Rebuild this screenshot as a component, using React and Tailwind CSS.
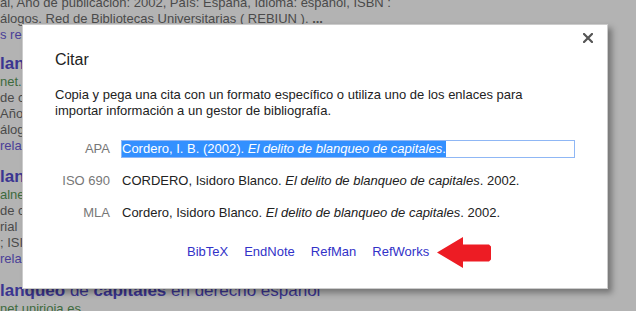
export default function App() {
  const snip = "text-[13px] leading-[16px] text-[#4a4a4a] whitespace-nowrap";
  const url = "text-[13px] leading-[16px] text-[#3d6a3d] whitespace-nowrap";
  const link = "text-[13px] leading-[16px] text-[#4a3f98] whitespace-nowrap";
  const title = "text-[17px] leading-[20px] text-[#3b3591] whitespace-nowrap";
  const clip = " w-[22px] overflow-hidden";
  return (
    <div className="relative w-[636px] h-[311px] overflow-hidden bg-[#b3b3b3] font-['Liberation_Sans',Arial,sans-serif]">
      {/* background page content (dimmed) */}
      <div className="-mt-[5px] flex flex-col">
        <div className={snip}>al, Año de publicación: 2002, País: España, Idioma: español, ISBN :</div>
        <div className={snip}>álogos. Red de Bibliotecas Universitarias ( REBIUN ). <b>...</b></div>
        <div className={link + clip}>s rel</div>

        <div className={title + clip + " mt-[11px]"}><b>lan</b></div>
        <div className={url + clip}>net.</div>
        <div className={snip + clip}>de c</div>
        <div className={snip + clip}>Año</div>
        <div className={snip + clip}>álog</div>
        <div className={link + clip}>rela</div>

        <div className={title + clip + " mt-[13px]"}><b>lan</b></div>
        <div className={url + clip}>alne</div>
        <div className={snip + clip}>de c</div>
        <div className={snip + clip}>rial</div>
        <div className={snip + clip}>; ISI</div>
        <div className={link + clip}>rela</div>

        <div className={title + " mt-[14px]"}><b>lanqueo</b> de <b>capitales</b> en derecho español</div>
        <div className={url}>net.unirioja.es</div>
      </div>

      {/* dialog */}
      <div className="absolute left-[22px] top-[24px] w-[586px] h-[265px] bg-white border border-black/20 shadow-[4px_4px_6px_rgba(0,0,0,0.35)] pl-[32px] pt-[25px] text-[#222]">
        <svg className="absolute left-[560px] top-[8px]" width="10" height="10" viewBox="0 0 10 10">
          <path d="M1 1 L9 9 M9 1 L1 9" stroke="#555" strokeWidth="2.2" strokeLinecap="square" />
        </svg>

        <div className="text-[16px] leading-[20px]">Citar</div>

        <div className="mt-[17px] text-[13px] leading-[16px] whitespace-nowrap">
          Copia y pega una cita con un formato específico o utiliza uno de los enlaces para
          <br />
          importar información a un gestor de bibliografía.
        </div>

        <div className="mt-[21px] flex flex-col gap-[14px] text-[13px]">
          <div className="flex items-center h-[18px]">
            <div className="w-[55px] text-right text-[#777]">APA</div>
            <div className="ml-[11px] w-[454px] h-[18px] border border-[#8fb7f5] flex items-center">
              <span className="bg-[#3390ff] text-white leading-[16px] whitespace-nowrap">
                Cordero, I. B. (2002). <i>El delito de blanqueo de capitales</i>.
              </span>
            </div>
          </div>
          <div className="flex items-center h-[18px]">
            <div className="w-[55px] text-right text-[#777]">ISO 690</div>
            <div className="ml-[12px] whitespace-nowrap">
              CORDERO, Isidoro Blanco. <i>El delito de blanqueo de capitales</i>. 2002.
            </div>
          </div>
          <div className="flex items-center h-[18px]">
            <div className="w-[55px] text-right text-[#777]">MLA</div>
            <div className="ml-[12px] whitespace-nowrap">
              Cordero, Isidoro Blanco. <i>El delito de blanqueo de capitales</i>. 2002.
            </div>
          </div>
        </div>

        <div className="mt-[22px] pl-[132px] flex gap-[16px] text-[13px] leading-[16px] text-[#3232c8]">
          <span>BibTeX</span>
          <span>EndNote</span>
          <span>RefMan</span>
          <span>RefWorks</span>
        </div>

        <svg className="absolute left-[414px] top-[212px]" width="55" height="31" viewBox="0 0 55 31">
          <polygon points="0,15.5 26,0 26,7.5 52,7.5 54,9.5 54,22.5 52,24.5 26,24.5 26,31" fill="#ed1c24" />
        </svg>
      </div>
    </div>
  );
}
